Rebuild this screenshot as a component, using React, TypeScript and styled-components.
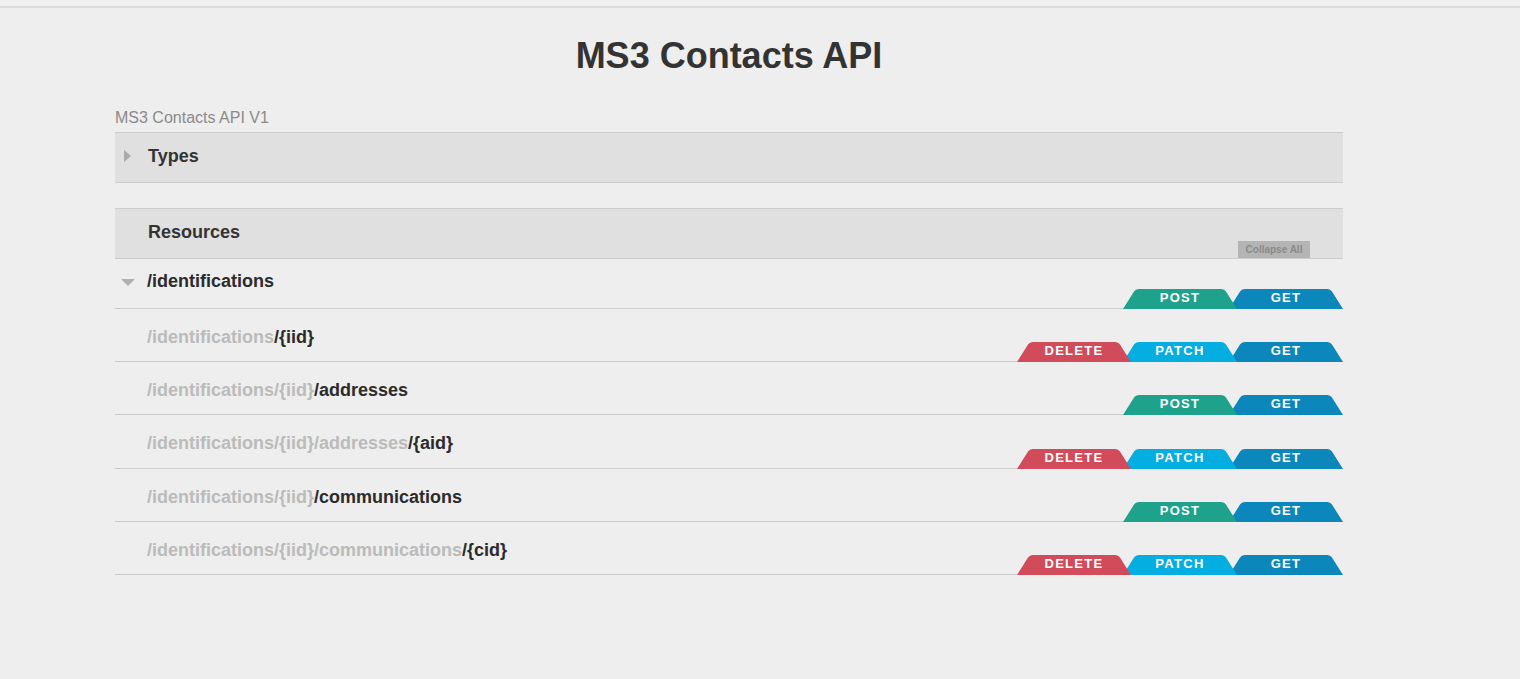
import React from 'react';
import styled, { createGlobalStyle } from 'styled-components';

const GlobalStyle = createGlobalStyle`
  body {
    margin: 0;
    background: #eeeeee;
    font-family: 'Liberation Sans', Arial, sans-serif;
  }
`;

const TopBar = styled.div`
  height: 6px;
  background: #f0f0f0;
  border-bottom: 2px solid #dadada;
`;

const Page = styled.div`
  padding-left: 115px;
  padding-bottom: 80px;
`;

const Container = styled.div`
  width: 1228px;
`;

const Title = styled.h1`
  margin: 28px 0 0;
  font-size: 36px;
  line-height: 40px;
  font-weight: bold;
  text-align: center;
  color: #333333;
`;

const Version = styled.div`
  margin-top: 32px;
  font-size: 16px;
  line-height: 20px;
  color: #8a8a8a;
`;

const Panel = styled.div<{ $gap?: number }>`
  position: relative;
  margin-top: ${(p) => p.$gap ?? 0}px;
  height: 51px;
  box-sizing: border-box;
  display: flex;
  align-items: flex-start;
  padding-top: 12px;
  background: #e0e0e0;
  border-top: 1px solid #cccccc;
  border-bottom: 1px solid #cccccc;
`;

const ToggleSlot = styled.div<{ $width?: number }>`
  width: ${(p) => p.$width ?? 33}px;
  height: 22px;
  flex-shrink: 0;
  display: flex;
  align-items: center;
  justify-content: center;
  padding-right: ${(p) => (p.$width ?? 33) - 25}px;
  box-sizing: border-box;
`;

const ArrowRight = styled.span`
  width: 0;
  height: 0;
  border-left: 7px solid #aaaaaa;
  border-top: 6px solid transparent;
  border-bottom: 6px solid transparent;
`;

const ArrowDown = styled.span`
  width: 0;
  height: 0;
  border-top: 7px solid #b0b0b0;
  border-left: 7px solid transparent;
  border-right: 7px solid transparent;
  margin-top: 2px;
`;

const Heading = styled.span`
  font-size: 18px;
  line-height: 22px;
  font-weight: bold;
  color: #333333;
`;

const CollapseButton = styled.button`
  position: absolute;
  right: 33px;
  bottom: 0;
  width: 72px;
  height: 17px;
  padding: 0;
  border: none;
  background: #b4b4b4;
  color: #8a8a8a;
  font-family: 'Liberation Sans', Arial, sans-serif;
  font-size: 10px;
  font-weight: bold;
  line-height: 17px;
  cursor: pointer;
`;

const Row = styled.div<{ $height: number; $top: number }>`
  height: ${(p) => p.$height}px;
  box-sizing: border-box;
  padding-top: ${(p) => p.$top}px;
  display: flex;
  align-items: flex-start;
  border-bottom: 1px solid #cccccc;
`;

const Path = styled.div`
  flex: 1;
  font-size: 18px;
  line-height: 22px;
  font-weight: bold;
  color: #2b2b2b;
`;

const Parent = styled.span`
  color: #bbbbbb;
`;

const Methods = styled.div`
  align-self: flex-end;
  margin-bottom: -1px;
  display: flex;
`;

const methodColors: Record<string, string> = {
  DELETE: '#d24b5a',
  PATCH: '#04aee0',
  GET: '#0c87bb',
  POST: '#1ea28b',
};

const Method = styled.span<{ $color: string; $layer: number }>`
  position: relative;
  z-index: ${(p) => p.$layer};
  width: 114px;
  height: 20px;
  margin-left: -8px;
  background: ${(p) => p.$color};
  clip-path: path('M0 20 L11 2.6 Q12.6 0 15.6 0 L98.4 0 Q101.4 0 103 2.6 L114 20 Z');
  color: #ffffff;
  font-size: 13px;
  font-weight: bold;
  letter-spacing: 1.3px;
  line-height: 18px;
  text-align: center;

  &:first-child {
    margin-left: 0;
  }
`;

type Resource = {
  parent: string;
  own: string;
  methods: string[];
};

const resources: Resource[] = [
  { parent: '/identifications', own: '/{iid}', methods: ['DELETE', 'PATCH', 'GET'] },
  { parent: '/identifications/{iid}', own: '/addresses', methods: ['POST', 'GET'] },
  { parent: '/identifications/{iid}/addresses', own: '/{aid}', methods: ['DELETE', 'PATCH', 'GET'] },
  { parent: '/identifications/{iid}', own: '/communications', methods: ['POST', 'GET'] },
  {
    parent: '/identifications/{iid}/communications',
    own: '/{cid}',
    methods: ['DELETE', 'PATCH', 'GET'],
  },
];

function MethodTabs({ methods }: { methods: string[] }) {
  return (
    <Methods>
      {methods.map((m, i) => (
        <Method key={m} $color={methodColors[m]} $layer={methods.length - i}>
          {m}
        </Method>
      ))}
    </Methods>
  );
}

export default function App() {
  return (
    <>
      <GlobalStyle />
      <TopBar />
      <Page>
        <Container>
          <Title>MS3 Contacts API</Title>
          <Version>MS3 Contacts API V1</Version>

          <Panel $gap={4}>
            <ToggleSlot>
              <ArrowRight />
            </ToggleSlot>
            <Heading>Types</Heading>
          </Panel>

          <Panel $gap={25}>
            <ToggleSlot />
            <Heading>Resources</Heading>
            <CollapseButton>Collapse All</CollapseButton>
          </Panel>

          <Row $height={50} $top={11}>
            <ToggleSlot $width={32}>
              <ArrowDown />
            </ToggleSlot>
            <Path>/identifications</Path>
            <MethodTabs methods={['POST', 'GET']} />
          </Row>

          {resources.map((r, i) => (
            <Row key={r.parent + r.own} $height={i === 2 ? 54 : 53} $top={17}>
              <ToggleSlot $width={32} />
              <Path>
                <Parent>{r.parent}</Parent>
                {r.own}
              </Path>
              <MethodTabs methods={r.methods} />
            </Row>
          ))}
        </Container>
      </Page>
    </>
  );
}
